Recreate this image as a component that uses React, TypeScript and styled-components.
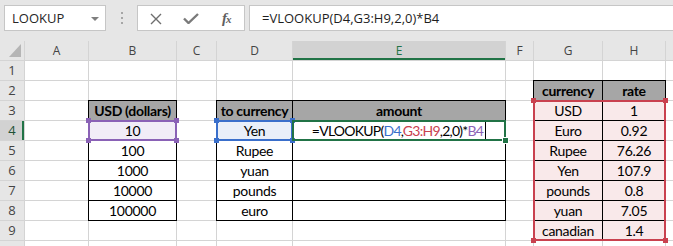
import React from 'react';
import styled, { createGlobalStyle, css } from 'styled-components';

const GREEN = '#217346';
const PURPLE = '#8a62b6';
const BLUE = '#3a6fcb';
const RED = '#c9414f';

const GlobalStyle = createGlobalStyle`
  html, body {
    margin: 0;
    padding: 0;
    background: #ffffff;
    overflow: hidden;
  }
`;

const Window = styled.div`
  width: 673px;
  height: 246px;
  overflow: hidden;
  background: #e6e6e6;
  font-family: "Open Sans", "Noto Sans", sans-serif;
`;

/* ---------- formula bar ---------- */

const FormulaBar = styled.div`
  height: 41px;
  box-sizing: border-box;
  padding: 5px 0 0 4px;
  display: flex;
  align-items: flex-start;
`;

const NameBox = styled.div`
  width: 102px;
  height: 26px;
  box-sizing: border-box;
  border: 1px solid #c6c6c6;
  background: #ffffff;
  display: flex;
  align-items: center;
  justify-content: space-between;
  padding: 0 6px 0 7px;
  font-size: 13px;
  line-height: 24px;
  color: #262626;
`;

const Caret = styled.span`
  width: 0;
  height: 0;
  border-left: 4px solid transparent;
  border-right: 4px solid transparent;
  border-top: 4px solid #7f7f7f;
  margin-top: 1px;
`;

const Grip = styled.div`
  width: 31px;
  height: 26px;
  display: flex;
  flex-direction: column;
  align-items: center;
  justify-content: center;
  gap: 3px;
`;

const GripDot = styled.span`
  width: 2px;
  height: 2px;
  background: #a6a6a6;
`;

const ButtonBox = styled.div`
  width: 108px;
  height: 26px;
  box-sizing: border-box;
  border: 1px solid #c6c6c6;
  background: #ffffff;
  display: grid;
  grid-template-columns: repeat(3, 1fr);
  align-items: center;
  justify-items: center;
`;

const Fx = styled.span`
  font-family: "Liberation Serif", "DejaVu Serif", serif;
  font-style: italic;
  font-weight: 700;
  font-size: 15px;
  color: #606060;
  line-height: 24px;
  letter-spacing: -1px;

  small {
    font-size: 11px;
  }
`;

const FormulaInput = styled.div`
  flex: 1;
  margin-left: 4px;
  height: 26px;
  box-sizing: border-box;
  border: 1px solid #c6c6c6;
  border-right: none;
  background: #ffffff;
  padding-left: 12px;
  font-size: 13px;
  line-height: 24px;
  color: #1e1e1e;
  white-space: nowrap;
`;

/* ---------- sheet ---------- */

const sheetTemplate = css`
  display: grid;
  grid-template-columns: 24px 63px 87px 39px 75px 212px 27px 68px 62px 1fr;
  grid-template-rows: repeat(11, 19px);
  gap: 1px;
`;

const SheetArea = styled.div`
  position: relative;
`;

const Grid = styled.div`
  ${sheetTemplate};
  background: #d4d4d4;
  padding-bottom: 1px;
`;

const OverlayGrid = styled.div`
  ${sheetTemplate};
  position: absolute;
  inset: 0;
  pointer-events: none;
`;

const Corner = styled.div`
  background: #e6e6e6;
  display: flex;
  align-items: flex-end;
  justify-content: flex-end;
  padding: 0 3px 3px 0;
`;

const ColHead = styled.div<{ $active?: boolean }>`
  background: ${p => (p.$active ? '#d2d2d2' : '#e6e6e6')};
  color: ${p => (p.$active ? GREEN : '#444444')};
  font-size: 12px;
  line-height: 19px;
  text-align: center;
  box-shadow: ${p => (p.$active ? `inset 0 -2px 0 ${GREEN}` : 'none')};
`;

const RowHead = styled.div<{ $active?: boolean }>`
  background: ${p => (p.$active ? '#d2d2d2' : '#e6e6e6')};
  color: ${p => (p.$active ? '#1f5136' : '#444444')};
  font-size: 13px;
  line-height: 19px;
  text-align: center;
  box-shadow: ${p => (p.$active ? `inset -2px 0 0 ${GREEN}` : 'none')};
`;

const Cell = styled.div<{ $tint?: string; $head?: boolean; $boxed?: boolean; $tight?: boolean }>`
  background: ${p => (p.$head ? '#a6a6a6' : p.$tint || '#ffffff')};
  box-shadow: ${p => (p.$boxed || p.$head ? '0 0 0 1px #000000' : 'none')};
  font-family: Lato, "Open Sans", sans-serif;
  font-size: 14px;
  font-weight: ${p => (p.$head ? 700 : 400)};
  letter-spacing: ${p => (p.$tight ? '-0.75px' : '-0.3px')};
  line-height: 19px;
  color: #000000;
  text-align: center;
  white-space: nowrap;
  overflow: visible;
`;

const Ref = styled.span<{ $c: string }>`
  color: ${p => p.$c};
`;

const TextCaret = styled.span`
  display: inline-block;
  width: 1px;
  height: 19px;
  background: #000000;
  vertical-align: top;
  margin-left: 2px;
`;

const RefBox = styled.div<{ $col: string; $row: string; $color: string }>`
  grid-column: ${p => p.$col};
  grid-row: ${p => p.$row};
  margin: -1px;
  border: 2px solid ${p => p.$color};
  position: relative;
`;

const Handle = styled.span<{ $color: string; $x: 'left' | 'right'; $y: 'top' | 'bottom' }>`
  position: absolute;
  width: 5px;
  height: 5px;
  background: ${p => p.$color};
  ${p => p.$x}: -4px;
  ${p => p.$y}: -4px;
`;

const FillHandle = styled.span`
  position: absolute;
  right: -5px;
  bottom: -5px;
  width: 5px;
  height: 5px;
  background: ${GREEN};
  border: 1px solid #ffffff;
`;

type CellData = { text?: string; head?: boolean; boxed?: boolean; tint?: string; formula?: boolean };

const PURPLE_TINT = '#f1edf7';
const BLUE_TINT = '#e9eff9';
const RED_TINT = '#f9e9ea';

const columns = ['A', 'B', 'C', 'D', 'E', 'F', 'G', 'H', ''];

const empty = (): CellData => ({});

const rate = (text: string): CellData => ({ text, boxed: true, tint: RED_TINT });
const box = (text = ''): CellData => ({ text, boxed: true });

// one array per row: A..I
const rows: CellData[][] = [
  [empty(), empty(), empty(), empty(), empty(), empty(), empty(), empty(), empty()],
  [empty(), empty(), empty(), empty(), empty(), empty(), { text: 'currency', head: true }, { text: 'rate', head: true }, empty()],
  [empty(), { text: 'USD (dollars)', head: true }, empty(), { text: 'to currency', head: true }, { text: 'amount', head: true }, empty(), rate('USD'), rate('1'), empty()],
  [empty(), { text: '10', boxed: true, tint: PURPLE_TINT }, empty(), { text: 'Yen', boxed: true, tint: BLUE_TINT }, { boxed: true, formula: true }, empty(), rate('Euro'), rate('0.92'), empty()],
  [empty(), box('100'), empty(), box('Rupee'), box(), empty(), rate('Rupee'), rate('76.26'), empty()],
  [empty(), box('1000'), empty(), box('yuan'), box(), empty(), rate('Yen'), rate('107.9'), empty()],
  [empty(), box('10000'), empty(), box('pounds'), box(), empty(), rate('pounds'), rate('0.8'), empty()],
  [empty(), box('100000'), empty(), box('euro'), box(), empty(), rate('yuan'), rate('7.05'), empty()],
  [empty(), empty(), empty(), empty(), empty(), empty(), rate('canadian'), rate('1.4'), empty()],
  [empty(), empty(), empty(), empty(), empty(), empty(), empty(), empty(), empty()],
];

const FormulaText: React.FC<{ caret?: boolean }> = ({ caret }) => (
  <>
    =VLOOKUP(<Ref $c={BLUE}>D4</Ref>,<Ref $c={RED}>G3:H9</Ref>,2,0)*<Ref $c={PURPLE}>B4</Ref>
    {caret && <TextCaret />}
  </>
);

const corners: Array<['left' | 'right', 'top' | 'bottom']> = [
  ['left', 'top'],
  ['right', 'top'],
  ['left', 'bottom'],
  ['right', 'bottom'],
];

const Range: React.FC<{ col: string; row: string; color: string }> = ({ col, row, color }) => (
  <RefBox $col={col} $row={row} $color={color}>
    {corners.map(([x, y]) => (
      <Handle key={x + y} $color={color} $x={x} $y={y} />
    ))}
  </RefBox>
);

const App: React.FC = () => {
  return (
    <Window>
      <GlobalStyle />
      <FormulaBar>
        <NameBox>
          LOOKUP
          <Caret />
        </NameBox>
        <Grip>
          <GripDot />
          <GripDot />
          <GripDot />
        </Grip>
        <ButtonBox>
          <svg width="12" height="12" viewBox="0 0 12 12">
            <path d="M1 1 L11 11 M11 1 L1 11" stroke="#6e6e6e" strokeWidth="1.4" fill="none" />
          </svg>
          <svg width="16" height="11" viewBox="0 0 16 11">
            <path d="M1 5.5 L5.5 10 L15 1" stroke="#7a7a7a" strokeWidth="2.4" fill="none" />
          </svg>
          <Fx>
            f<small>x</small>
          </Fx>
        </ButtonBox>
        <FormulaInput>=VLOOKUP(D4,G3:H9,2,0)*B4</FormulaInput>
      </FormulaBar>

      <SheetArea>
        <Grid>
          <Corner>
            <svg width="12" height="13" viewBox="0 0 12 13">
              <polygon points="12,0 12,13 0,13" fill="#b5b5b5" />
            </svg>
          </Corner>
          {columns.map((c, i) => (
            <ColHead key={i} $active={c === 'E'}>
              {c}
            </ColHead>
          ))}
          {rows.map((row, r) => (
            <React.Fragment key={r}>
              {/* row 10 is cut off by the window, its number sits below the edge */}
              <RowHead $active={r === 3}>{r < 9 ? r + 1 : ''}</RowHead>
              {row.map((cell, c) => (
                <Cell key={c} $head={cell.head} $boxed={cell.boxed} $tint={cell.tint} $tight={cell.formula}>
                  {cell.formula ? <FormulaText caret /> : cell.text}
                </Cell>
              ))}
            </React.Fragment>
          ))}
        </Grid>

        <OverlayGrid>
          <Range col="3 / 4" row="5 / 6" color={PURPLE} />
          <Range col="5 / 6" row="5 / 6" color={BLUE} />
          <Range col="8 / 10" row="4 / 11" color={RED} />
          <RefBox $col="6 / 7" $row="5 / 6" $color={GREEN}>
            <FillHandle />
          </RefBox>
        </OverlayGrid>
      </SheetArea>
    </Window>
  );
};

export default App;
